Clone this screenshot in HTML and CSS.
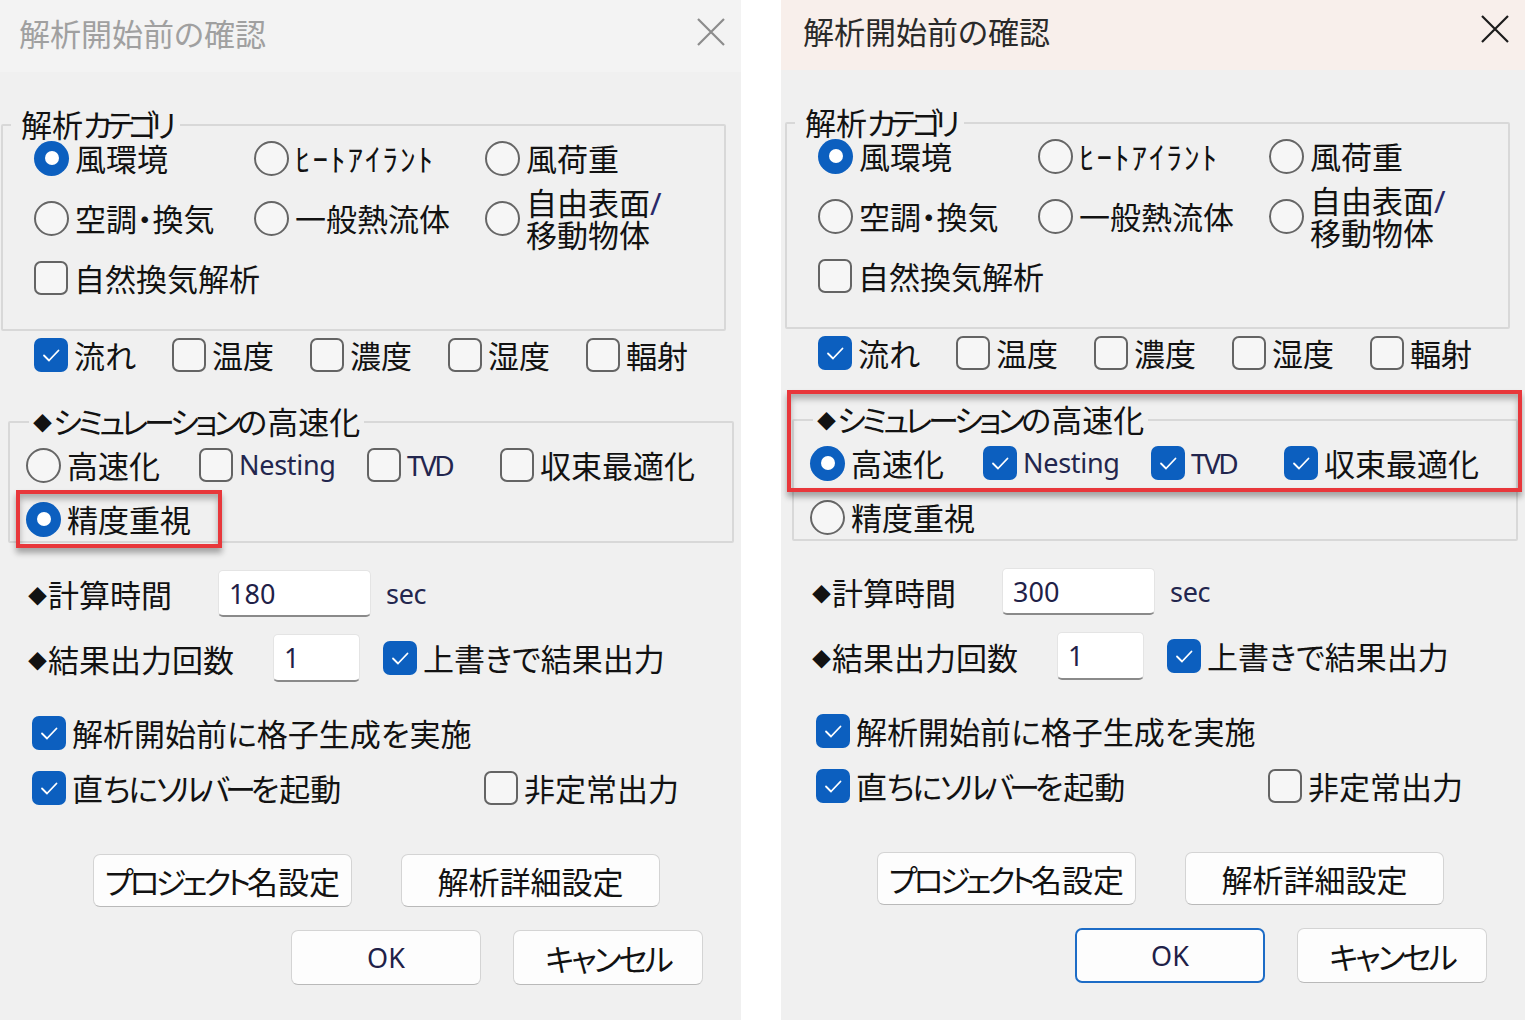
FILE: index.html
```html
<!DOCTYPE html>
<html lang="ja">
<head>
<meta charset="utf-8">
<title>解析開始前の確認</title>
<link rel="stylesheet" href="styles.css">
</head>
<body>
<div class="screen">

  <section class="dialog dialog--left">
    <header class="titlebar">
      <span class="title">解析開始前の確認</span>
      <svg class="close" viewBox="0 0 28 28"><path d="M1 1 L27 27 M27 1 L1 27"/></svg>
    </header>

    <div class="group group--cat">
      <div class="legend">解析<span class="kn6">カテゴリ</span></div>
      <div class="cat-grid">
        <div class="opt"><span class="radio on"></span><span>風環境</span></div>
        <div class="opt"><span class="radio"></span><span class="hw">ﾋｰﾄｱｲﾗﾝﾄ</span></div>
        <div class="opt"><span class="radio"></span><span>風荷重</span></div>
        <div class="opt"><span class="radio"></span><span>空調・換気</span></div>
        <div class="opt"><span class="radio"></span><span>一般熱流体</span></div>
        <div class="opt"><span class="radio"></span><span class="two"><span class="line">自由表面<span class="lat-slash">/</span></span><span class="line">移動物体</span></span></div>
        <div class="opt"><span class="cb"></span><span>自然換気解析</span></div>
      </div>
    </div>

    <div class="flags">
      <div class="opt"><span class="cb on"><svg viewBox="0 0 34 34"><path d="M10 17.5 L15 22.5 L24.5 12.5"/></svg></span><span>流れ</span></div>
      <div class="opt"><span class="cb"></span><span>温度</span></div>
      <div class="opt"><span class="cb"></span><span>濃度</span></div>
      <div class="opt"><span class="cb"></span><span>湿度</span></div>
      <div class="opt"><span class="cb"></span><span>輻射</span></div>
    </div>

    <div class="group group--speed">
      <div class="legend"><span class="diamond">◆</span><span class="kn4">シミュレーション</span>の高速化</div>
      <div class="speed-row">
        <div class="opt"><span class="radio"></span><span>高速化</span></div>
        <div class="opt"><span class="cb"></span><span class="lat">Nesting</span></div>
        <div class="opt"><span class="cb"></span><span class="lat lat--tight">TVD</span></div>
        <div class="opt"><span class="cb"></span><span>収束最適化</span></div>
      </div>
      <div class="speed-row2">
        <div class="opt"><span class="radio on"></span><span>精度重視</span></div>
      </div>
    </div>

    <div class="row-time">
      <span class="field-label"><span class="diamond">◆</span>計算時間</span>
      <span class="field field--time">180</span>
      <span class="lat unit">sec</span>
    </div>

    <div class="row-count">
      <span class="field-label field-label--count"><span class="diamond">◆</span>結果出力回数</span>
      <span class="field field--count">1</span>
      <div class="opt"><span class="cb on"><svg viewBox="0 0 34 34"><path d="M10 17.5 L15 22.5 L24.5 12.5"/></svg></span><span>上書きで結果出力</span></div>
    </div>

    <div class="row-pre">
      <div class="opt"><span class="cb on"><svg viewBox="0 0 34 34"><path d="M10 17.5 L15 22.5 L24.5 12.5"/></svg></span><span>解析開始前に格子生成を実施</span></div>
    </div>

    <div class="row-solver">
      <div class="opt opt--solver"><span class="cb on"><svg viewBox="0 0 34 34"><path d="M10 17.5 L15 22.5 L24.5 12.5"/></svg></span><span>直<span class="kn2">ちに</span><span class="kn5">ソルバー</span>を起動</span></div>
      <div class="opt"><span class="cb"></span><span>非定常出力</span></div>
    </div>

    <div class="btn-row1">
      <span class="btn btn--wide"><span class="kn4">プロジェクト</span>名設定</span>
      <span class="btn btn--wide">解析詳細設定</span>
    </div>
    <div class="btn-row2">
      <span class="btn btn--std lat-btn">OK</span>
      <span class="btn btn--std"><span class="kn3">キャンセル</span></span>
    </div>

    <div class="highlight highlight--left"></div>
  </section>

  <section class="dialog dialog--right">
    <header class="titlebar">
      <span class="title">解析開始前の確認</span>
      <svg class="close" viewBox="0 0 28 28"><path d="M1 1 L27 27 M27 1 L1 27"/></svg>
    </header>

    <div class="group group--cat">
      <div class="legend">解析<span class="kn6">カテゴリ</span></div>
      <div class="cat-grid">
        <div class="opt"><span class="radio on"></span><span>風環境</span></div>
        <div class="opt"><span class="radio"></span><span class="hw">ﾋｰﾄｱｲﾗﾝﾄ</span></div>
        <div class="opt"><span class="radio"></span><span>風荷重</span></div>
        <div class="opt"><span class="radio"></span><span>空調・換気</span></div>
        <div class="opt"><span class="radio"></span><span>一般熱流体</span></div>
        <div class="opt"><span class="radio"></span><span class="two"><span class="line">自由表面<span class="lat-slash">/</span></span><span class="line">移動物体</span></span></div>
        <div class="opt"><span class="cb"></span><span>自然換気解析</span></div>
      </div>
    </div>

    <div class="flags">
      <div class="opt"><span class="cb on"><svg viewBox="0 0 34 34"><path d="M10 17.5 L15 22.5 L24.5 12.5"/></svg></span><span>流れ</span></div>
      <div class="opt"><span class="cb"></span><span>温度</span></div>
      <div class="opt"><span class="cb"></span><span>濃度</span></div>
      <div class="opt"><span class="cb"></span><span>湿度</span></div>
      <div class="opt"><span class="cb"></span><span>輻射</span></div>
    </div>

    <div class="group group--speed">
      <div class="legend"><span class="diamond">◆</span><span class="kn4">シミュレーション</span>の高速化</div>
      <div class="speed-row">
        <div class="opt"><span class="radio on"></span><span>高速化</span></div>
        <div class="opt"><span class="cb on"><svg viewBox="0 0 34 34"><path d="M10 17.5 L15 22.5 L24.5 12.5"/></svg></span><span class="lat">Nesting</span></div>
        <div class="opt"><span class="cb on"><svg viewBox="0 0 34 34"><path d="M10 17.5 L15 22.5 L24.5 12.5"/></svg></span><span class="lat lat--tight">TVD</span></div>
        <div class="opt"><span class="cb on"><svg viewBox="0 0 34 34"><path d="M10 17.5 L15 22.5 L24.5 12.5"/></svg></span><span>収束最適化</span></div>
      </div>
      <div class="speed-row2">
        <div class="opt"><span class="radio"></span><span>精度重視</span></div>
      </div>
    </div>

    <div class="row-time">
      <span class="field-label"><span class="diamond">◆</span>計算時間</span>
      <span class="field field--time">300</span>
      <span class="lat unit">sec</span>
    </div>

    <div class="row-count">
      <span class="field-label field-label--count"><span class="diamond">◆</span>結果出力回数</span>
      <span class="field field--count">1</span>
      <div class="opt"><span class="cb on"><svg viewBox="0 0 34 34"><path d="M10 17.5 L15 22.5 L24.5 12.5"/></svg></span><span>上書きで結果出力</span></div>
    </div>

    <div class="row-pre">
      <div class="opt"><span class="cb on"><svg viewBox="0 0 34 34"><path d="M10 17.5 L15 22.5 L24.5 12.5"/></svg></span><span>解析開始前に格子生成を実施</span></div>
    </div>

    <div class="row-solver">
      <div class="opt opt--solver"><span class="cb on"><svg viewBox="0 0 34 34"><path d="M10 17.5 L15 22.5 L24.5 12.5"/></svg></span><span>直<span class="kn2">ちに</span><span class="kn5">ソルバー</span>を起動</span></div>
      <div class="opt"><span class="cb"></span><span>非定常出力</span></div>
    </div>

    <div class="btn-row1">
      <span class="btn btn--wide"><span class="kn4">プロジェクト</span>名設定</span>
      <span class="btn btn--wide">解析詳細設定</span>
    </div>
    <div class="btn-row2">
      <span class="btn btn--std btn--default lat-btn">OK</span>
      <span class="btn btn--std"><span class="kn3">キャンセル</span></span>
    </div>

    <div class="highlight highlight--right"></div>
  </section>

</div>
</body>
</html>
```

FILE: styles.css
```css
* { box-sizing: border-box; }

html, body {
  margin: 0;
  padding: 0;
}

body {
  width: 1525px;
  height: 1020px;
  overflow: hidden;
  background: #ffffff;
  font-family: "Noto Sans CJK JP", "Noto Sans", sans-serif;
  font-size: 31px;
  color: #121212;
  font-feature-settings: "palt";
}

.screen {
  display: flex;
  height: 1020px;
}

.dialog {
  position: relative;
  flex: none;
  width: 744px;
  height: 1020px;
  background: #f0f0f0;
}

.dialog--left { margin-left: -3px; }
.dialog--right { margin-left: 40px; }

/* ---------- title bar ---------- */
.titlebar {
  display: flex;
  justify-content: space-between;
  align-items: flex-start;
  height: 70px;
  padding: 0 16px 0 22px;
  background: #f8efeb;
}

.dialog--left .titlebar {
  height: 72px;
  background: #f3f3f3;
}

.title {
  margin-top: 11px;
  font-size: 31px;
  line-height: 40px;
  color: #2a2a2a;
}

.dialog--left .title {
  margin-top: 13px;
  color: #a0a0a0;
}

.close {
  width: 28px;
  height: 28px;
  margin-top: 15px;
  fill: none;
  stroke: #1c1c1c;
  stroke-width: 2.2;
}

.dialog--left .close {
  margin-top: 18px;
  stroke: #8c8c8c;
}

/* ---------- generic controls ---------- */
.opt {
  display: flex;
  align-items: center;
  gap: 6px;
  height: 36px;
  line-height: 36px;
  white-space: nowrap;
}

.radio {
  position: relative;
  flex: none;
  width: 35px;
  height: 35px;
  border-radius: 50%;
  border: 2.5px solid #666666;
  background: #f6f6f6;
}

.radio.on {
  border: none;
  background: #0c5fbf;
}

.radio.on::after {
  content: "";
  position: absolute;
  left: 10.5px;
  top: 10.5px;
  width: 14px;
  height: 14px;
  border-radius: 50%;
  background: #ffffff;
}

.cb {
  flex: none;
  display: flex;
  align-items: center;
  justify-content: center;
  width: 34px;
  height: 34px;
  border-radius: 7px;
  border: 2.5px solid #646464;
  background: #f6f6f6;
}

.cb.on {
  border: none;
  background: #0c5fbf;
}

.cb svg {
  width: 34px;
  height: 34px;
  fill: none;
  stroke: #ffffff;
  stroke-width: 1.8;
  stroke-linecap: round;
  stroke-linejoin: round;
}

.lat {
  font-family: "Noto Sans", "Open Sans", sans-serif;
  font-size: 27px;
  color: #23264e;
  letter-spacing: -0.3px;
}

.lat--tight { letter-spacing: -2.5px; font-size: 28px; }

.lat-slash {
  font-family: "Noto Sans", sans-serif;
  color: #2a2a6a;
}

.hw { letter-spacing: 2px; }

.kn2 { letter-spacing: -2px; }
.kn3 { letter-spacing: -3px; }
.kn4 { letter-spacing: -4px; }
.kn5 { letter-spacing: -5px; }
.kn6 { letter-spacing: -6px; }

.two {
  display: flex;
  flex-direction: column;
  line-height: 32px;
  white-space: nowrap;
}

.two .line {
  display: block;
  height: 32px;
}

.diamond {
  font-size: 19px;
  vertical-align: 3px;
  margin-right: 1px;
}

/* ---------- group boxes ---------- */
.group {
  border: 2px solid #d8d8d8;
  border-radius: 2px;
}

.legend {
  width: fit-content;
  height: 34px;
  line-height: 34px;
  margin-top: -19px;
  background: #f0f0f0;
}

.group--cat {
  width: 725px;
  margin: 52px 0 0 4px;
  padding-bottom: 34px;
}

.group--cat .legend {
  margin-left: 8px;
  padding: 0 10px;
}

.cat-grid {
  display: grid;
  grid-template-columns: 220px 231px 1fr;
  grid-template-rows: 34px 64px 34px;
  row-gap: 11px;
  padding-left: 31px;
  align-items: center;
}

.flags {
  display: grid;
  grid-template-columns: repeat(5, 138px);
  margin-top: 6px;
  padding-left: 37px;
}

.group--speed {
  width: 726px;
  margin: 48px 0 0 11px;
  padding: 0 0 4px 16px;
}

.group--speed .legend {
  margin-left: 3px;
  padding: 0 4px;
}

.speed-row {
  display: grid;
  grid-template-columns: 173px 168px 133px 1fr;
  margin-top: 9px;
}

.speed-row2 {
  margin-top: 18px;
}

/* ---------- fields ---------- */
.row-time,
.row-count {
  display: flex;
  align-items: center;
  padding-left: 31px;
}

.row-time {
  height: 47px;
  margin-top: 27px;
}

.row-count {
  height: 48px;
  margin-top: 17px;
}

.field-label {
  width: 190px;
  flex: none;
  white-space: nowrap;
}

.field-label--count { width: 245px; }

.field {
  display: flex;
  align-items: center;
  flex: none;
  height: 100%;
  padding-left: 10px;
  background: #ffffff;
  border: 1px solid #e4e4e4;
  border-bottom: 2px solid #8a8a8a;
  border-radius: 5px;
  font-family: "Noto Sans", sans-serif;
  font-size: 27px;
  color: #1f2148;
}

.field--time { width: 153px; }
.field--count { width: 87px; margin-right: 23px; }

.unit {
  margin-left: 15px;
  font-size: 27px;
}

.row-pre {
  margin-top: 33px;
  padding-left: 35px;
}

.row-solver {
  display: flex;
  margin-top: 19px;
  padding-left: 35px;
}

.opt--solver { width: 452px; }

/* ---------- buttons ---------- */
.btn {
  display: flex;
  align-items: center;
  justify-content: center;
  flex: none;
  background: #fdfdfd;
  border: 1px solid #d4d4d4;
  border-bottom-color: #b9b9b9;
  border-radius: 7px;
  white-space: nowrap;
}

.btn-row1 {
  display: flex;
  gap: 49px;
  margin-top: 48px;
  padding-left: 96px;
}

.btn--wide {
  width: 259px;
  height: 53px;
}

.btn-row2 {
  display: flex;
  gap: 32px;
  margin-top: 23px;
  padding-left: 294px;
}

.btn--std {
  width: 190px;
  height: 55px;
}

.lat-btn {
  font-family: "Noto Sans", sans-serif;
  font-size: 27px;
  color: #1f2148;
}

.btn--default {
  border: 2px solid #1d6cc6;
}

/* ---------- red annotation frame ---------- */
.highlight {
  position: absolute;
  border: 4px solid #e8373b;
  box-shadow: 0 5px 6px rgba(0, 0, 0, 0.32), inset 0 5px 6px rgba(0, 0, 0, 0.28);
}

.highlight--left {
  left: 19px;
  top: 490px;
  width: 206px;
  height: 58px;
}

.highlight--right {
  left: 6px;
  top: 390px;
  width: 735px;
  height: 102px;
}
```
